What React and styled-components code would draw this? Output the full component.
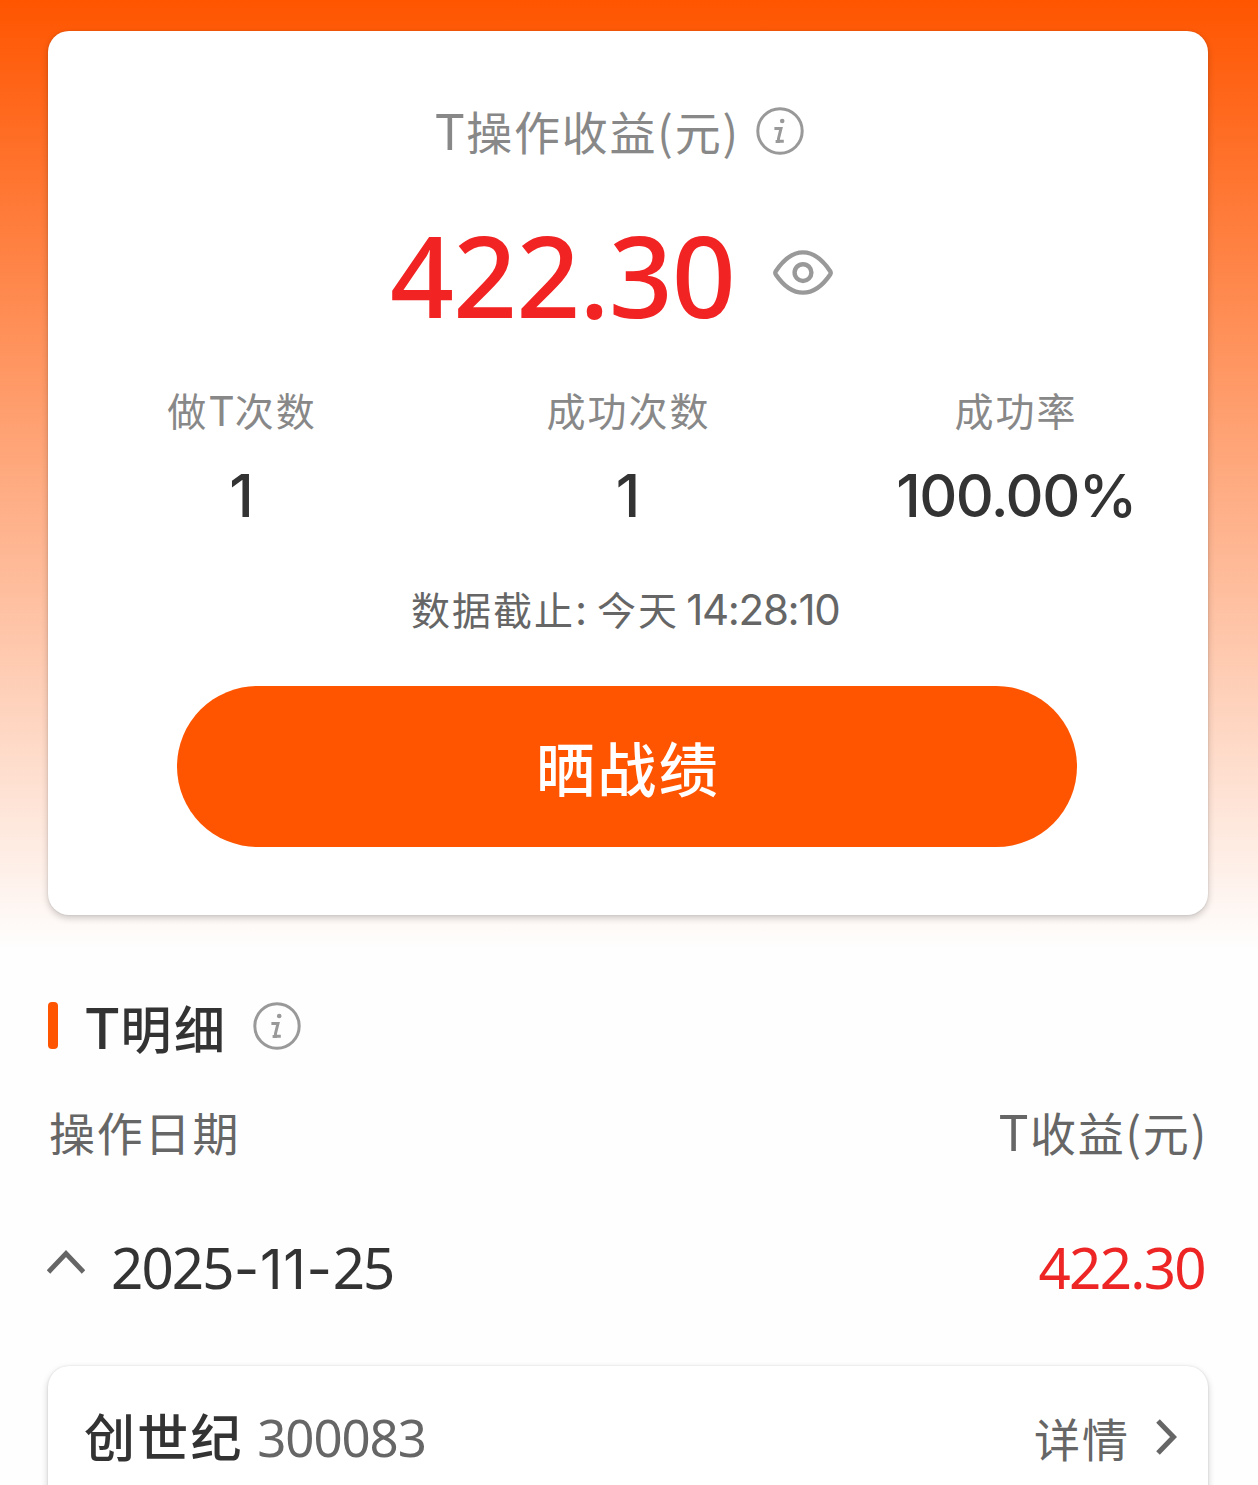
import React from 'react'
import styled, { createGlobalStyle } from 'styled-components'

const GlobalStyle = createGlobalStyle`
  * {
    box-sizing: border-box;
  }
  body {
    margin: 0;
    background: #fefefe;
    font-family: 'Noto Sans CJK SC', sans-serif;
    color: #333;
    overflow: hidden;
  }
`

const Page = styled.div`
  height: 1485px;
  padding: 31px 50px 0 48px;
  overflow: hidden;
  background: linear-gradient(#ff5500 0, #fefefe 950px);
`

const Card = styled.section`
  height: ${(props) => props.$height}px;
  padding-top: ${(props) => props.$top}px;
  border-radius: 21px;
  background: #fff;
  box-shadow: 0 3px 7px rgba(0, 0, 0, 0.2), 0 0 2px rgba(0, 0, 0, 0.12);
`

const Text = styled.span`
  font-size: ${(props) => props.$size}px;
  font-weight: ${(props) => props.$weight || 400};
  letter-spacing: ${(props) => props.$space || 0}px;
  line-height: ${(props) => props.$line || 50}px;
  color: ${(props) => props.$color || '#333'};
  white-space: pre;
`

const Digits = styled(Text)`
  font-family: ${(props) => props.$font || 'Noto Sans'}, sans-serif;
`

// latin letters sitting inside another line, they must not grow the line box
const Latin = styled.span`
  font-family: Inter, sans-serif;
  font-size: ${(props) => props.$size}px;
  letter-spacing: ${(props) => props.$space || 0}px;
  line-height: 0;
  margin-left: ${(props) => props.$before || 0}px;
  margin-right: ${(props) => props.$gap || 0}px;
`

const Title = styled.div`
  display: flex;
  align-items: center;
  height: 60px;
  padding-left: 386px;

  svg {
    margin: 2px 0 0 16px;
  }
`

const Profit = styled.div`
  display: flex;
  align-items: center;
  height: 110px;
  margin-top: 60px;
  padding-left: 342px;

  svg {
    margin: -4px 0 0 38px;
  }
`

const Stats = styled.div`
  display: grid;
  grid-template-columns: 388px 385px 1fr;
  margin: 54px -3px 0 0;
`

const Stat = styled.div`
  display: flex;
  flex-direction: column;
  align-items: center;
  gap: 32px;
`

const Deadline = styled.div`
  display: flex;
  height: 50px;
  margin-top: 57px;
  padding-left: 363px;
`

const ShareButton = styled.button`
  display: block;
  width: 900px;
  height: 161px;
  margin: 53px 0 0 129px;
  padding: 5px 0 0 2px;
  border: 0;
  border-radius: 81px;
  background: #ff5500;
  font-family: inherit;
`

const Section = styled.div`
  display: flex;
  align-items: center;
  height: 50px;
  margin-top: 86px;
  padding-top: 2px;

  svg {
    margin: -3px 0 0 25px;
  }
`

const Bar = styled.i`
  width: 10px;
  height: 47px;
  margin: -4px 26px 0 0;
  border-radius: 4px;
  background: #ff5500;
`

const Row = styled.div`
  display: flex;
  justify-content: space-between;
  align-items: baseline;
  height: ${(props) => props.$height}px;
  margin-top: ${(props) => props.$top}px;
  padding: ${(props) => props.$pad || 0};
`

const Group = styled.div`
  display: flex;
  align-items: baseline;
`

const InfoIcon = () => (
  <svg width="48" height="48" viewBox="-24 -24 48 48" fill="none" stroke="#999">
    <circle r="22.2" strokeWidth="3" />
    <circle cx="2.2" cy="-10" r="2.3" fill="#999" stroke="none" />
    <path d="M-5.6 -2.6H1L-1.5 7.5Q-2 10.2 0.2 10.2H3.8M-4.4 10.4H0" strokeWidth="3" />
  </svg>
)

const EyeIcon = () => (
  <svg width="60" height="46" viewBox="0 0 60 46" fill="none" stroke="#999" strokeWidth="4.4">
    <path d="M2.8 21.2C10 10.5 19 2.4 30 2.4S50 10.5 57.2 21.2Q58.2 22.8 57.2 24.4C50 35 41 42.6 30 42.6S10 35 2.8 24.4Q1.8 22.8 2.8 21.2Z" />
    <circle cx="30" cy="22.6" r="8.4" />
  </svg>
)

const ChevronUp = styled.svg`
  margin: 0 26px 0 -1px;
  transform: translateY(-15px);
`

const ChevronRight = styled.svg`
  margin-left: 25px;
  transform: translateY(-2px);
`

const stats = [
  { label: <>做<Latin $size={41}>T</Latin>次数</>, value: '1', space: 1 },
  { label: '成功次数', value: '1', space: 1 },
  { label: '成功率', value: '100.00%', space: -1.5 },
]

const Summary = () => (
  <Card $height={884} $top={69}>
    <Title>
      <Text $size={46} $space={1.8} $line={60} $color="#888">
        <Latin $size={49} $gap={0.5}>T</Latin>操作收益(元)
      </Text>
      <InfoIcon />
    </Title>
    <Profit>
      <Digits $size={112} $weight={500} $space={-1} $line={110} $color="#f22323">422.30</Digits>
      <EyeIcon />
    </Profit>
    <Stats>
      {stats.map((stat, i) => (
        <Stat key={i}>
          <Text $size={39} $space={2} $color="#888">{stat.label}</Text>
          <Digits $font="Inter" $size={59} $weight={500} $space={stat.space} $line={60}>{stat.value}</Digits>
        </Stat>
      ))}
    </Stats>
    <Deadline>
      <Text $size={39} $space={2} $color="#666">
        数据截止<Latin $size={42} $gap={-2}>: </Latin>今天 <Latin $size={42} $space={-1.3} $before={-3.5}>14:28:10</Latin>
      </Text>
    </Deadline>
    <ShareButton>
      <Text $size={59} $weight={500} $space={2.3} $color="#fff">晒战绩</Text>
    </ShareButton>
  </Card>
)

const Details = () => (
  <>
    <Section>
      <Bar />
      <Text $size={51} $weight={500} $space={2.5}>
        <Latin $size={56}>T</Latin>明细
      </Text>
      <InfoIcon />
    </Section>
    <Row $height={50} $top={55} $pad="0 0 0 1px">
      <Text $size={46} $space={1.8} $color="#666">操作日期</Text>
      <Text $size={46} $space={1.8} $color="#666">
        <Latin $size={49} $gap={0.5}>T</Latin>收益(元)
      </Text>
    </Row>
    <Row $height={70} $top={77} $pad="0 3px 0 0">
      <Group>
        <ChevronUp width="38" height="24" viewBox="0 0 38 24" fill="none" stroke="#666" strokeWidth="4.8">
          <path d="M1.5 22L19 3.5L36.5 22" />
        </ChevronUp>
        <Digits $size={56.5} $space={-1.9} $line={70}>
          2025<Latin $size={55.5} $space={0.7} $before={1}>-11-</Latin>25
        </Digits>
      </Group>
      <Digits $size={56.5} $space={-1.7} $line={70} $color="#ee2525">422.30</Digits>
    </Row>
  </>
)

const Stock = styled(Card)`
  margin-top: 63px;
`

const App = () => {
  return (
    <Page>
      <GlobalStyle />
      <Summary />
      <Details />
      <Stock $height={300} $top={39}>
        <Row $height={60} $top={0} $pad="0 31px 0 36px">
          <Group>
            <Text $size={51} $weight={500} $space={2.2} $line={60}>创世纪 </Text>
            <Digits $size={51} $space={-1.1} $line={60} $color="#666">300083</Digits>
          </Group>
          <Group>
            <Text $size={46} $space={2} $line={60} $color="#666">详情</Text>
            <ChevronRight width="22" height="36" viewBox="0 0 22 36" fill="none" stroke="#666" strokeWidth="5">
              <path d="M3 2L18.5 18L3 34" />
            </ChevronRight>
          </Group>
        </Row>
      </Stock>
    </Page>
  )
}

export default App
